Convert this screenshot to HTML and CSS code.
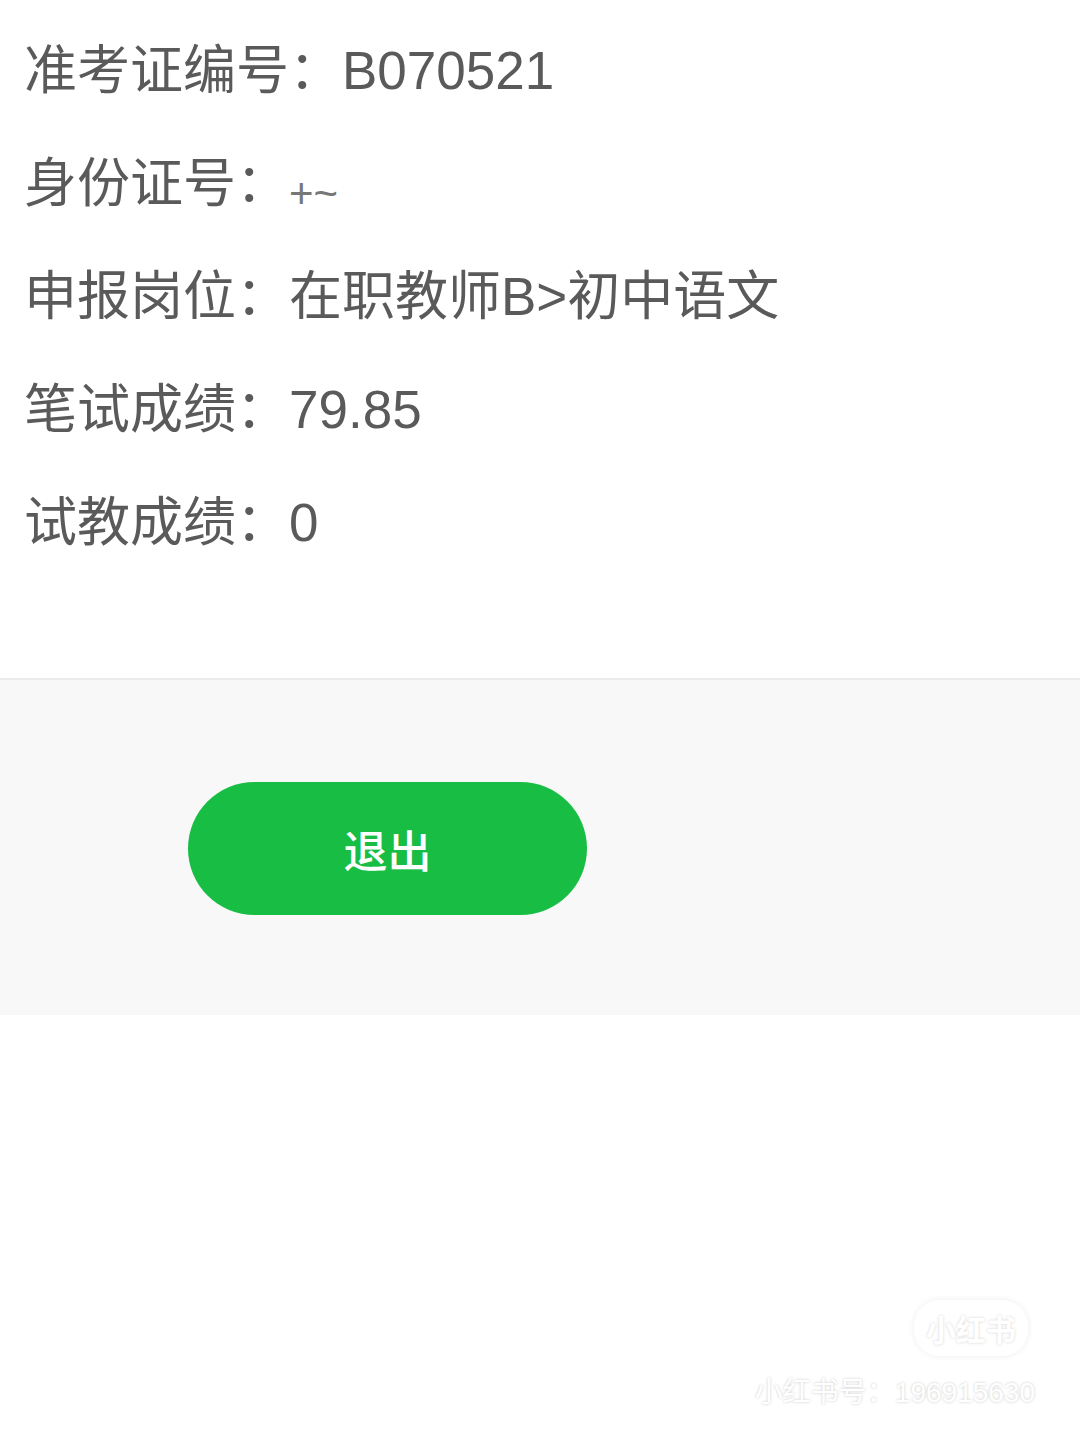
FILE: index.html
```html
<!DOCTYPE html>
<html lang="zh-CN">
<head>
    <meta charset="UTF-8">
    <title>成绩查询</title>
    <link rel="stylesheet" href="styles.css">
</head>
<body>
    <!-- 1. 成绩信息 -->
    <section class="info">
        <p class="row"><span class="lab">准考证编号：</span>B070521</p>
        <p class="row"><span class="lab">身份证号：</span><span class="mask">+~</span></p>
        <p class="row"><span class="lab">申报岗位：</span>在职教师B&gt;初中语文</p>
        <p class="row"><span class="lab">笔试成绩：</span>79.85</p>
        <p class="row"><span class="lab">试教成绩：</span>0</p>
    </section>

    <!-- 2. 버튼구역 -->
    <section class="act">
        <a href="" class="btn">退出</a>
    </section>

    <!-- 워터마크 -->
    <div class="wm">
        <span class="wm-logo">小红书</span>
        <span class="wm-id">小红书号：196915630</span>
    </div>
</body>
</html>
```

FILE: styles.css
```css
html,
body {
    margin: 0;
    padding: 0;
    width: 100%;
    height: 100%;
}

body {
    position: relative;
    background: #fff;
    font-family: "Liberation Sans", "Noto Sans CJK SC", sans-serif;
    color: #5a5a5a;
}

/* 1. 성적정보 */
.info {
    padding: 14px 0 99px 24px;
    border-bottom: 2px solid #ebebeb;
}

.row {
    margin: 0;
    font-size: 53px;
    line-height: 113px;
    height: 113px;
    white-space: nowrap;
}

.mask {
    font-size: 42px;
    color: #777;
    vertical-align: -6px;
}

/* 2. 버튼 */
.act {
    background: #f8f8f8;
    padding: 102px 0 100px 188px;
}

.btn {
    display: flex;
    align-items: center;
    justify-content: center;
    width: 399px;
    height: 133px;
    border-radius: 67px;
    background: #18bd44;
    color: #fff;
    font-size: 44px;
    font-weight: 500;
    text-decoration: none;
}

/* 워터마크 */
.wm {
    position: absolute;
    right: 45px;
    bottom: 30px;
    display: flex;
    flex-direction: column;
    align-items: flex-end;
    gap: 14px;
}

.wm-logo {
    margin-right: 7px;
    padding: 6px 12px;
    border-radius: 26px;
    background: rgba(255, 255, 255, .9);
    box-shadow: 0 0 6px rgba(0, 0, 0, .08);
    color: #fff;
    font-size: 30px;
    font-weight: bold;
    text-shadow: 0 0 3px rgba(0, 0, 0, .18);
}

.wm-id {
    color: #fff;
    font-size: 28px;
    text-shadow: 0 0 3px rgba(0, 0, 0, .22);
}
```
